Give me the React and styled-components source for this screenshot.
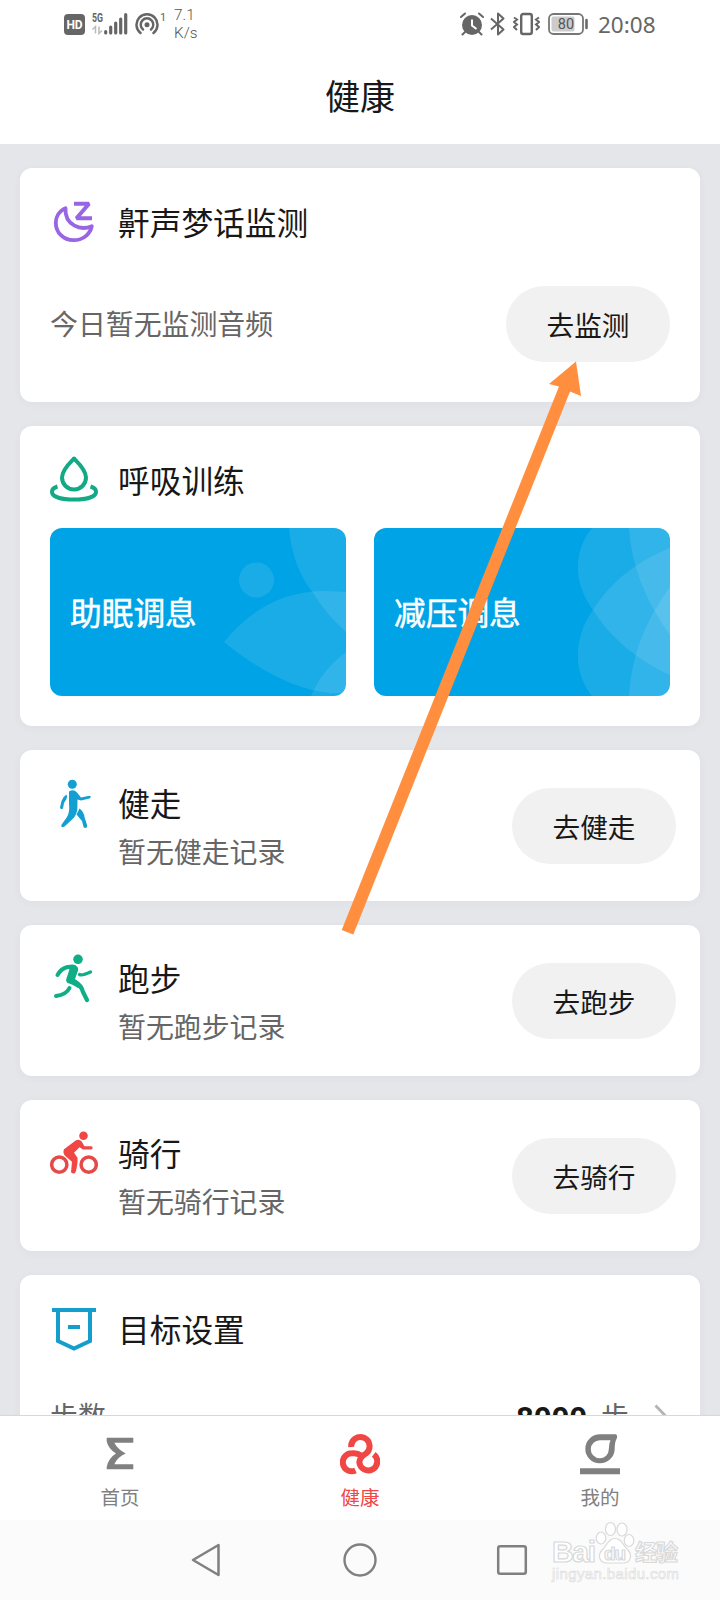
import React from 'react';
import styled, { createGlobalStyle } from 'styled-components';

const GlobalStyle = createGlobalStyle`
  * { box-sizing: border-box; }
  body {
    margin: 0;
    background: #fff;
    font-family: "KaiTi", "STKaiti", "Noto Sans CJK SC", sans-serif;
    color: #181818;
  }
  svg { display: block; flex: none; }
`;

const Screen = styled.div`
  position: relative;
  width: 720px;
  height: 1600px;
  overflow: hidden;
  display: flex;
  flex-direction: column;
  background: #e5e6ea;
`;

const StatusBar = styled.div`
  height: 48px;
  flex: none;
  padding: 0 64px;
  display: flex;
  align-items: center;
  background: #fff;
  color: #666;
`;

const Speed = styled.div`
  width: 60px;
  margin-left: 8px;
  font: 300 15.3px/18px Roboto, sans-serif;
  color: #555;
`;

const Spacer = styled.div`
  flex: 1;
`;

const Clock = styled.div`
  width: 58px;
  margin-left: 10px;
  font: 400 22.5px/30px "Noto Sans", sans-serif;
  padding-top: 2px;
  white-space: nowrap;
`;

const Header = styled.header`
  height: 96px;
  flex: none;
  display: flex;
  justify-content: center;
  background: #fff;
  font-size: 35px;
  line-height: 94px;
`;

const Content = styled.main`
  flex: 1;
  min-height: 0;
  overflow: hidden;
  padding: 24px 20px 0;
  display: flex;
  flex-direction: column;
  gap: 24px;
`;

const Card = styled.section`
  flex: none;
  height: ${(p) => p.$height}px;
  border-radius: 12px;
  background: #fff;
  padding: 30px 30px 0;
  box-shadow: 0 2px 10px rgba(70, 80, 100, 0.04);
`;

const CardHead = styled.div`
  display: flex;
  align-items: center;
  gap: 20px;
  height: 48px;
`;

const CardTitle = styled.h2`
  margin: 0;
  font-size: 31.7px;
  font-weight: 400;
  line-height: 46px;
  padding-bottom: 2px;
`;

const MonitorRow = styled.div`
  margin-top: 40px;
  height: 76px;
  display: flex;
  align-items: center;
  justify-content: space-between;
`;

const Muted = styled.span`
  font-size: 27.9px;
  line-height: 38px;
  padding-bottom: 2px;
  color: #666;
`;

const PillButton = styled.button`
  flex: none;
  width: 164px;
  height: 76px;
  padding: 0;
  border: 0;
  border-radius: 38px;
  background: #f1f1f1;
  color: #181818;
  font-family: inherit;
  font-size: 27.6px;
`;

const Tiles = styled.div`
  display: flex;
  gap: 28px;
  margin-top: 24px;
`;

const Tile = styled.div`
  width: 296px;
  height: 168px;
  display: grid;
  align-items: center;
  border-radius: 12px;
  overflow: hidden;
  background: #00a3e5;
  color: #fff;
  & > * { grid-area: 1 / 1; }
`;

const TileLabel = styled.span`
  padding: 0 0 2px 20px;
  font-size: 31.7px;
  line-height: 46px;
  -webkit-text-stroke: 0.5px #fff;
`;

const ActivityCard = styled(Card)`
  display: flex;
  align-items: flex-start;
  padding: 29px 24px 0 30px;
`;

const ActivityText = styled.div`
  flex: 1;
  margin-left: 20px;
  display: flex;
  flex-direction: column;
  gap: 5px;
`;

const ActivityAction = styled.div`
  padding-top: 9px;
`;

const GoalRow = styled.div`
  margin-top: 43px;
  height: 40px;
  display: flex;
  align-items: center;
`;

const GoalValue = styled.strong`
  margin-right: 14px;
  padding-top: 5px;
  font: 700 31px/40px Roboto, sans-serif;
`;

const GoalUnit = styled(Muted)`
  margin-right: 25px;
`;

const Chevron = styled.svg`
  margin-top: 5px;
`;

const TabBar = styled.nav`
  height: 105px;
  flex: none;
  display: grid;
  grid-template-columns: repeat(3, 240px);
  background: #fff;
  border-top: 1px solid #d8d8d8;
`;

const Tab = styled.div`
  display: flex;
  flex-direction: column;
  align-items: center;
  padding-top: 16px;
  gap: 7px;
  font-size: 19.5px;
  line-height: 28px;
  color: ${(p) => (p.$active ? '#f04745' : '#808080')};
`;

const SystemBar = styled.div`
  height: 80px;
  flex: none;
  display: grid;
  grid-template-columns: 206px 308px 206px;
  align-items: center;
  background: #fbfbfb;
  & > :first-child { justify-self: end; margin-right: -16px; }
  & > :nth-child(2) { justify-self: center; }
  & > :nth-child(3) { margin-left: -18px; }
`;

const ArrowOverlay = styled.svg`
  position: absolute;
  left: 338px;
  top: 358px;
`;

const Watermark = styled.svg`
  position: absolute;
  left: 550px;
  top: 1520px;
`;

const HdIcon = () => (
  <svg width="21" height="21" viewBox="0 0 21 21">
    <rect width="21" height="21" rx="4" fill="#666" />
    <text x="10.5" y="15.2" textAnchor="middle" fontFamily="Roboto, sans-serif" fontWeight="700" fontSize="12" fill="#fff" textLength="16">HD</text>
  </svg>
);

const SignalIcon = () => (
  <svg width="36" height="24" viewBox="0 0 36 24" style={{ marginLeft: 7 }}>
    <text x="0" y="9.5" fontFamily="Roboto, sans-serif" fontWeight="700" fontSize="12" fill="#666" textLength="11" lengthAdjust="spacingAndGlyphs">5G</text>
    <path d="M3.5 21.500V14.500L.5 17.500M7 14.500V21.500L10 18.500" fill="none" stroke="#bbb" strokeWidth="1.5" />
    <path d="M13.700 21V19.500M18.700 21V15M23.700 21V11M28.700 21V7M33.700 21V2.500" fill="none" stroke="#666" strokeWidth="3.200" strokeLinecap="round" />
  </svg>
);

const HotspotIcon = () => (
  <svg width="31" height="24" viewBox="0 0 31 24" style={{ marginLeft: 7 }}>
    <g fill="none" stroke="#666" strokeWidth="2.500" strokeLinecap="round">
      <path d="M5.500 21A10.500 10.500 0 1 1 18.500 21" />
      <path d="M8 17.500A6.300 6.300 0 1 1 16 17.500" />
    </g>
    <circle cx="12" cy="12.700" r="2.500" fill="#666" />
    <text x="25" y="9" fontFamily="Roboto, sans-serif" fontSize="11" fill="#666">1</text>
  </svg>
);

const AlarmIcon = () => (
  <svg width="24" height="24" viewBox="0 0 24 24">
    <circle cx="12" cy="13" r="10" fill="#666" />
    <path d="M1 5L5 1.500M19 1.500L23 5M5 20L2.500 22.500M19 20L21.500 22.500" stroke="#666" strokeWidth="2" strokeLinecap="round" />
    <path d="M12 7.500V13.500L16.500 17" fill="none" stroke="#fff" strokeWidth="2" />
  </svg>
);

const BluetoothIcon = () => (
  <svg width="15" height="24" viewBox="0 0 15 24" style={{ marginLeft: 6 }}>
    <path d="M1 6.500L13.500 17.500L8 22.500V1.500L13.500 6.500L1 17.500" fill="none" stroke="#666" strokeWidth="2" strokeLinejoin="round" />
  </svg>
);

const VibrateIcon = () => (
  <svg width="27" height="24" viewBox="0 0 27 24" style={{ marginLeft: 8 }}>
    <rect x="8.200" y="2" width="10.600" height="20" rx="2" fill="none" stroke="#666" strokeWidth="2.400" />
    <path d="M1 5.500L4 7.500L1 10L4 12.500L1 15L4 18M26 5.500L23 7.500L26 10L23 12.500L26 15L23 18" fill="none" stroke="#666" strokeWidth="2" />
  </svg>
);

const BatteryIcon = () => (
  <svg width="40" height="22" viewBox="0 0 40 22" style={{ marginLeft: 8 }}>
    <rect x="1" y="1" width="34" height="20" rx="4.500" fill="none" stroke="#777" strokeWidth="1.800" />
    <rect x="3.500" y="3.500" width="23" height="15" rx="2" fill="#ccc" />
    <text x="18" y="16" textAnchor="middle" fontFamily="Roboto, sans-serif" fontSize="14.500" fill="#555">80</text>
    <path d="M38.500 7V15" stroke="#666" strokeWidth="2.500" strokeLinecap="round" />
  </svg>
);

const SleepIcon = () => (
  <svg width="48" height="48" viewBox="0 0 48 48">
    <g transform="translate(0 1.700)" fill="none" stroke="#9865e3" strokeWidth="3.800" strokeLinejoin="round">
      <path d="M15.500 8.500C8.500 11.500 5.800 18 5.800 23C5.800 33 13.500 40.500 23.500 40.500C34 40.500 40.500 33.500 41.800 26.500C37 28.500 31 29.500 24.500 26C18 22.500 15 16 15.500 8.500Z" />
      <path d="M24 4H39L26.500 18.500H42" strokeWidth="4" strokeLinejoin="miter" strokeMiterlimit="1.500" />
    </g>
  </svg>
);

const BreathIcon = () => (
  <svg width="48" height="48" viewBox="0 0 48 48">
    <g fill="none" stroke="#12a985" strokeWidth="4" strokeLinejoin="round">
      <path d="M24 2.500C19.500 7 12 14 12 21.500A12 12 0 0 0 36 21.500C36 14 28.500 7 24 2.500Z" />
      <path d="M7.500 30.500C4 31.500 2 33.500 2 35.700C2 41 12 43.500 24 43.500S46 41 46 35.700C46 33.500 44 31.500 40.500 30.500" />
    </g>
  </svg>
);

const WalkIcon = () => (
  <svg width="48" height="50" viewBox="0 0 48 50">
    <g fill="#149fd2">
      <circle cx="22.300" cy="5.200" r="4.500" />
      <path d="M19 12.500Q23.500 9.500 27 13.500L31 18.500L39.500 16.700Q42 17.500 39.500 19.500L31 21.500L27.500 20.500L27.300 31Q26 37.500 21.500 41L14.500 47.500Q11 49.500 11.300 46L17 38Q20 33 19 25Z" />
      <path d="M16.500 15.500Q17.500 17 16.500 20L14 24L13 29.500Q10.500 31 10 28.500L11.500 22Q13 17.500 16.500 15.500Z" />
      <path d="M29.500 29.500Q34 33 34.500 38L37.200 46.500Q37.500 50 33.700 48.500L32 42L26.500 35.500Z" />
    </g>
  </svg>
);

const RunIcon = () => (
  <svg width="48" height="50" viewBox="0 0 48 50">
    <g fill="none" stroke="#0fae87" strokeLinecap="round" strokeLinejoin="round">
      <path d="M7.500 21Q11 14.500 17.500 13L24 13" strokeWidth="4" />
      <path d="M37 46L33 38Q31 31 25 28" strokeWidth="4.200" />
      <path d="M19.500 34Q16.500 40.500 6 42" strokeWidth="4" />
      <path d="M29.500 20.500Q32 22 40.500 18" strokeWidth="3.300" />
    </g>
    <path d="M16 12Q24 9 27 12.500Q29 14 27.500 18L25 25Q29 28 33 33L28 34Q22 30 17.500 29Q15 26.500 17 23L19.500 15Z" fill="#0fae87" />
    <circle cx="28" cy="5.300" r="4.800" fill="#0fae87" />
  </svg>
);

const BikeIcon = () => (
  <svg width="48" height="48" viewBox="0 0 48 48">
    <g transform="translate(0 1.700)">
      <g fill="none" stroke="#e64a48" strokeWidth="3.500">
        <circle cx="9.300" cy="34" r="7.600" />
        <circle cx="38.700" cy="34" r="7.600" />
      </g>
      <circle cx="33.500" cy="5" r="4.300" fill="#f04745" />
      <path d="M14 18.500L26 9.500Q29 8 31.500 10.500L34.500 15.500H41.500Q44 17 41.500 18.700H33L29.500 16.500L24 22L27.500 27Q28 32 25.800 41Q24 44.500 21 41.500L22 31L15 25Q12.500 22 14 18.500Z" fill="#f04745" />
    </g>
  </svg>
);

const GoalIcon = () => (
  <svg width="48" height="48" viewBox="0 0 48 48">
    <g fill="none" stroke="#159dcc" strokeWidth="4">
      <path d="M2 5H46" />
      <path d="M8 5V36L24 43.500L40 36V5" />
      <path d="M18 22H30" />
    </g>
  </svg>
);

const HomeIcon = () => (
  <svg width="40" height="44" viewBox="0 0 40 44">
    <path d="M6.700 5.700H33.300V10.700H14.300Q17.500 17 25.700 21.500Q17.500 25 14.300 32.300H33.300V37.300H6.700V35Q8.500 26 16 21.500Q8.500 17 6.700 9.500Z" fill="#808080" />
  </svg>
);

const HealthIcon = () => (
  <svg width="40" height="44" viewBox="0 0 40 44">
    <g fill="none" stroke="#f04745" strokeWidth="6">
      <path d="M11.200 15A9.200 9.200 0 1 1 26 21.500Q19.800 25 19.300 30.300A9 9 0 1 0 33.800 22.300" />
      <path d="M15.500 38.500A9 9 0 1 1 12 21.300Q17 20.500 21 23.500" />
    </g>
  </svg>
);

const MineIcon = () => (
  <svg width="40" height="44" viewBox="0 0 40 44">
    <path d="M20 2.300H36Q38 4 36.500 7Q34.700 10 34.700 17.300A14.700 14.500 0 1 1 20 2.300ZM20 8.300A9 9 0 1 0 28.800 17.300Q28.800 12 30.500 8.300Z" fillRule="evenodd" fill="#808080" />
    <path d="M0 39.300H40" stroke="#808080" strokeWidth="6" />
  </svg>
);

const Petals = ({ shapes, children }) => (
  <svg width="296" height="168" viewBox="0 0 296 168" fill="#fff" fillOpacity="0.1">
    {shapes.map((d) => <path key={d} d={d} />)}
    {children}
  </svg>
);

const sleepPetals = [
  'M239 0Q242 38 263 65Q276 86 296 104V0Z',
  'M174 114Q216 62 277 63L296 64V165L280 165Q232 161 174 114Z',
  'M261 168Q272 142 296 124V168Z',
];

const relaxPetals = [
  'M218 0C199 24 199 54 219 82C238 112 264 132 296 147V0Z',
  'M218 168C199 144 199 110 219 82C238 52 264 33 296 20V168Z',
  'M255 0Q258 54 296 107V0Z',
  'M255 168Q258 110 296 59V168Z',
];

const activities = [
  { name: '健走', Icon: WalkIcon },
  { name: '跑步', Icon: RunIcon },
  { name: '骑行', Icon: BikeIcon },
];

export default function App() {
  return (
    <>
      <GlobalStyle />
      <Screen>
        <StatusBar>
          <HdIcon />
          <SignalIcon />
          <HotspotIcon />
          <Speed>7.1<br />K/s</Speed>
          <Spacer />
          <AlarmIcon />
          <BluetoothIcon />
          <VibrateIcon />
          <BatteryIcon />
          <Clock>20:08</Clock>
        </StatusBar>
        <Header>健康</Header>
        <Content>
          <Card $height={234}>
            <CardHead>
              <SleepIcon />
              <CardTitle>鼾声梦话监测</CardTitle>
            </CardHead>
            <MonitorRow>
              <Muted>今日暂无监测音频</Muted>
              <PillButton>去监测</PillButton>
            </MonitorRow>
          </Card>
          <Card $height={300}>
            <CardHead>
              <BreathIcon />
              <CardTitle>呼吸训练</CardTitle>
            </CardHead>
            <Tiles>
              <Tile>
                <Petals shapes={sleepPetals}>
                  <circle cx="206.500" cy="52" r="17.500" />
                </Petals>
                <TileLabel>助眠调息</TileLabel>
              </Tile>
              <Tile>
                <Petals shapes={relaxPetals} />
                <TileLabel>减压调息</TileLabel>
              </Tile>
            </Tiles>
          </Card>
          {activities.map(({ name, Icon }) => (
            <ActivityCard key={name} $height={151}>
              <Icon />
              <ActivityText>
                <CardTitle>{name}</CardTitle>
                <Muted>暂无{name}记录</Muted>
              </ActivityText>
              <ActivityAction>
                <PillButton>去{name}</PillButton>
              </ActivityAction>
            </ActivityCard>
          ))}
          <Card $height={240}>
            <CardHead>
              <GoalIcon />
              <CardTitle>目标设置</CardTitle>
            </CardHead>
            <GoalRow>
              <Muted>步数</Muted>
              <Spacer />
              <GoalValue>8000</GoalValue>
              <GoalUnit>步</GoalUnit>
              <Chevron width="16" height="30" viewBox="0 0 16 30">
                <path d="M1.500 1.500L14.500 15L1.500 28.500" fill="none" stroke="#b4b4b4" strokeWidth="2.800" />
              </Chevron>
            </GoalRow>
          </Card>
        </Content>
        <TabBar>
          <Tab><HomeIcon />首页</Tab>
          <Tab $active><HealthIcon />健康</Tab>
          <Tab><MineIcon />我的</Tab>
        </TabBar>
        <SystemBar>
          <svg width="32" height="36" viewBox="0 0 32 36">
            <path d="M28.500 3V33L3 18Z" fill="none" stroke="#808080" strokeWidth="2.500" strokeLinejoin="round" />
          </svg>
          <svg width="34" height="34" viewBox="0 0 34 34">
            <circle cx="17" cy="17" r="15.500" fill="none" stroke="#808080" strokeWidth="2.400" />
          </svg>
          <svg width="32" height="32" viewBox="0 0 32 32">
            <rect x="2.200" y="2.200" width="27.600" height="27.600" rx="2" fill="none" stroke="#808080" strokeWidth="2.500" />
          </svg>
        </SystemBar>
        <ArrowOverlay width="250" height="580" viewBox="338 358 250 580">
          <path d="M576 361.500L581 396L570 391.500L353.300 934.500L341.700 930L559 386.500L549 384Z" fill="#ff8f3e" />
        </ArrowOverlay>
        <Watermark width="140" height="70" viewBox="0 0 140 70">
          <g fill="#fff" stroke="#d9d9d9" strokeWidth="1.200">
            <ellipse cx="51" cy="18" rx="4.800" ry="6" />
            <ellipse cx="60.500" cy="9" rx="5" ry="6.500" />
            <ellipse cx="72" cy="9.500" rx="5" ry="6.500" />
            <ellipse cx="79" cy="20.500" rx="4.800" ry="6" />
            <path d="M65 18.500C72 18.500 73 26 78 30C83 36 80 43 73 43H57C50 43 47 36 52 30C57 26 58 18.500 65 18.500Z" />
          </g>
          <g fill="#fff" stroke="#d9d9d9" strokeWidth="1.200" fontWeight="700">
            <text x="2" y="42" fontFamily="Liberation Sans, sans-serif" fontSize="30" textLength="44">Bai</text>
            <text x="54" y="40" fontFamily="Liberation Sans, sans-serif" fontSize="19" textLength="22">du</text>
            <text x="85" y="40" fontFamily="Noto Sans CJK SC, sans-serif" fontSize="22" textLength="43">经验</text>
          </g>
          <text x="2" y="59" fontFamily="Liberation Sans, sans-serif" fontSize="15" fill="#fff" stroke="#dedede" strokeWidth="0.700" textLength="127">jingyan.baidu.com</text>
        </Watermark>
      </Screen>
    </>
  );
}
